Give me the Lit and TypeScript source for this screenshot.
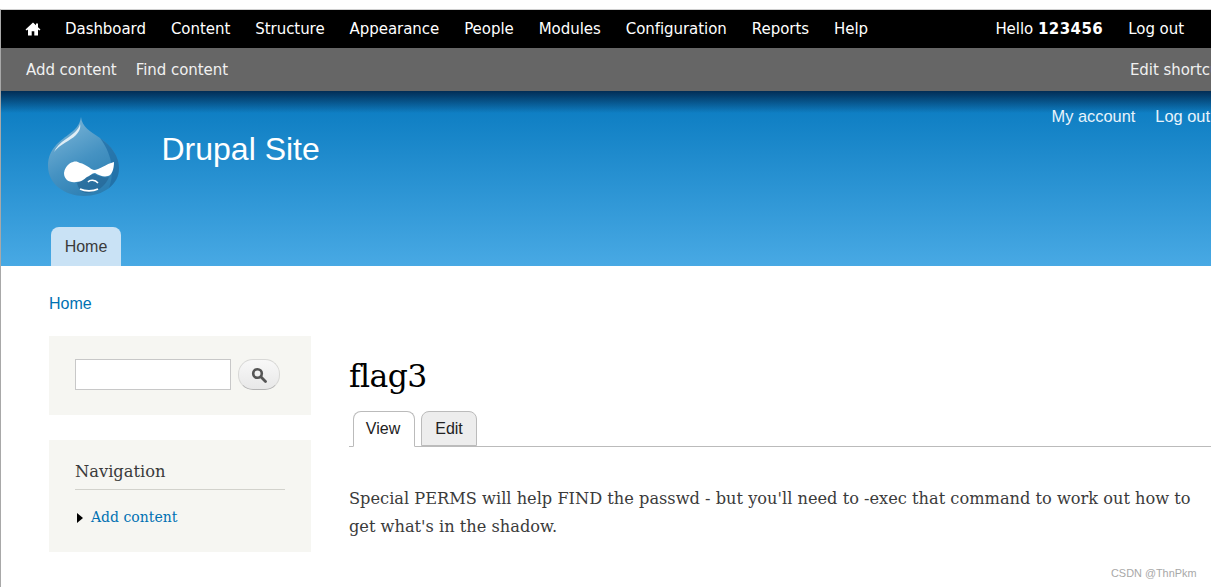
import { LitElement, html, css } from "lit";
import { customElement } from "lit/decorators.js";

const tools = ["Dashboard", "Content", "Structure", "Appearance", "People", "Modules", "Configuration", "Reports", "Help"];

@customElement("app-root")
export class AppRoot extends LitElement {
  static styles = css`
    :host { display: block; height: 587px; overflow: hidden; position: relative; background: #fff; font-family: "Liberation Sans", Arial, sans-serif; }
    a { color: inherit; text-decoration: none; }
    .page { height: 578px; margin-top: 9px; border-top: 1px solid #d0d0d0; border-left: 1px solid #a8a8a8; box-sizing: border-box; display: block; }
    .toolbar, .shortcuts { display: flex; align-items: center; font-family: "DejaVu Sans", Verdana, sans-serif; font-size: 15px; white-space: nowrap; letter-spacing: -0.05px; }
    .toolbar { height: 38px; background: #000; color: #fff; padding: 0 27px 0 24px; }
    .home { display: flex; width: 16px; height: 16px; margin-right: 24px; }
    .tools { display: flex; gap: 25px; }
    .user { margin-left: auto; display: flex; gap: 25px; }
    .user b { font-weight: 700; letter-spacing: 0.45px; }
    .shortcuts { height: 43px; background: #666; color: #f0f0f0; padding: 0 0 0 25px; gap: 19px; }
    .edit { margin-left: auto; margin-right: -22px; flex: none; }
    .header { height: 175px; box-sizing: border-box; background: linear-gradient(#0779bf 0, #48a9e4 100%); position: relative; color: #fff; display: flex; flex-direction: column; overflow: hidden; }
    .header::before { content: ""; position: absolute; left: 0; right: 0; top: 0; height: 22px; background: linear-gradient(rgba(0,20,50,.75), rgba(0,20,50,0)); }
    .secondary { position: absolute; top: 16px; right: 1px; display: flex; gap: 20px; font-size: 16.4px; color: #e8f3fb; }
    .brand { display: flex; align-items: flex-start; height: 136px; }
    .logo { width: 110px; height: 100px; margin: 14px 0 0 29px; flex: none; }
    .name { font-size: 32px; line-height: 37px; margin: 40px 0 0 21.5px; }
    .nav { display: flex; padding-left: 50px; }
    .tab { width: 70px; height: 39px; box-sizing: border-box; background: #c9e2f5; color: #3a3a3a; border-radius: 8px 8px 0 0; font-size: 16px; text-align: center; line-height: 39px; }
    .crumb { padding: 28px 0 0 48px; font-size: 16px; line-height: 19px; color: #0071b3; }
    .columns { display: flex; margin-top: 23px; padding-left: 48px; }
    .side { width: 262px; flex: none; display: flex; flex-direction: column; gap: 25px; }
    .block { background: #f6f6f2; padding: 23px 26px 25px; }
    .search { display: flex; gap: 7px; }
    .input { width: 156px; height: 31px; box-sizing: border-box; background: #fff; border: 1px solid #c8c8c8; }
    .btn { width: 42px; height: 31px; box-sizing: border-box; border-radius: 15px; border: 1px solid #d8d8d6; border-bottom-color: #b4b4b4; background: linear-gradient(#f8f8f8, #e8e8e8); display: flex; align-items: center; justify-content: center; }
    .block.menu { height: 112px; box-sizing: border-box; padding: 20px 26px 0; font-family: "DejaVu Serif", Georgia, serif; }
    h2 { margin: 0; font-weight: 400; font-size: 16.3px; line-height: 23px; padding-bottom: 6px; color: #3b3b3b; border-bottom: 1px solid #d2d2cc; width: 210px; }
    .item { display: flex; align-items: center; margin-top: 16px; font-size: 14px; line-height: 22px; color: #0071b3; }
    .arrow { width: 0; height: 0; border-left: 6px solid #000; border-top: 5px solid transparent; border-bottom: 5px solid transparent; margin: 1px 8px 0 2px; }
    .main { flex: 1; margin-left: 38px; font-family: "DejaVu Serif", Georgia, serif; }
    h1 { margin: 18px 0 0; font-weight: 400; font-size: 31.5px; line-height: 44px; color: #000; letter-spacing: -0.6px; }
    .tabs { display: flex; margin-top: 13px; gap: 6px; padding-left: 4px; border-bottom: 1px solid #bbb; font-family: "Liberation Sans", Arial, sans-serif; font-size: 16px; height: 35px; }
    .t { box-sizing: border-box; height: 36px; border: 1px solid #bbb; border-radius: 8px 8px 0 0; line-height: 33px; text-align: center; color: #222; }
    .t.on { width: 62px; padding-right: 2px; background: #fff; border-bottom-color: #fff; }
    .t.off { width: 56px; height: 35px; background: #ededed; }
    p { margin: 38px 0 0; font-size: 16.22px; line-height: 28px; color: #3b3b3b; width: 850px; }
    .mark { position: absolute; left: 1111px; top: 567px; font-size: 10.9px; line-height: 13px; color: #a8a8a8; }
  `;

  render() {
    return html`
      <div class="page">
        <div class="toolbar">
          <svg class="home" viewBox="0 0 16 16"><path fill="#fff" d="M8 1.5 0.5 8.6 1.7 9.6 3 8.5V14.5H6.7V10.3H9.3V14.5H13V8.5L14.3 9.6 15.5 8.6 13 6.2V2.5H11V4.3Z"/></svg>
          <div class="tools">${tools.map((t) => html`<a>${t}</a>`)}</div>
          <div class="user"><span>Hello <b>123456</b></span><a>Log out</a></div>
        </div>
        <div class="shortcuts"><a>Add content</a><a>Find content</a><a class="edit">Edit shortcuts</a></div>
        <div class="header">
          <div class="secondary"><a>My account</a><a>Log out</a></div>
          <div class="brand">
            <svg class="logo" viewBox="0 0 110 100">
              <defs>
                <linearGradient id="d" x1="0.2" y1="0" x2="0.7" y2="1"><stop offset="0" stop-color="#7db6d8"/><stop offset=".55" stop-color="#4592c2"/><stop offset="1" stop-color="#2a7db1"/></linearGradient>
              </defs>
              <path fill="url(#d)" d="M51 12C52 22 60 26 70 33C82 41 89 52 89 63C89 80 73 91 54 91C35 91 18 79 18 61C18 44 30 36 38 30C45 25 50 20 51 12Z"/>
              <path fill="#1f6ea6" opacity=".75" d="M70 33C82 41 89 52 89 63C89 72 85 78 79 83C84 70 84 52 70 33Z"/>
              <path fill="#fff" opacity=".8" d="M50 19C49 25 42 30 36 34C30 38 26 42 24 47C30 39 40 36 46 30C49 27 51 23 50 19Z"/>
              <path fill="#235f8c" opacity=".55" d="M47 78C52 74 56 71 64 69C71 72 75 73 79 72C76 81 66 88 56 88C51 87 48 83 47 78Z"/>
              <path fill="#fff" d="M34 68C35 60 42 57 43 57C46 56 48 57 50 58C56 59 60 64 64 65C69 65 76 59 84 57C84 64 82 70 78 71C74 72 70 71 65 68C62 68 60 71 57 72C54 74 52 77 46 77C40 78 34 75 34 68Z"/>
              <path fill="none" stroke="#fff" stroke-width="1.7" d="M50 84C55 86.5 63 86.5 68 84"/>
              <path fill="none" stroke="#fff" stroke-width="1.5" d="M58 77C60 74.5 65 74.5 68 78"/>
            </svg>
            <div class="name">Drupal Site</div>
          </div>
          <div class="nav"><a class="tab">Home</a></div>
        </div>
        <div class="crumb"><a>Home</a></div>
        <div class="columns">
          <div class="side">
            <div class="block">
              <div class="search">
                <div class="input"></div>
                <div class="btn"><svg width="16" height="16" viewBox="0 0 16 16"><circle cx="6.5" cy="6.5" r="4.3" fill="none" stroke="#555" stroke-width="2.6"/><path d="M9.8 9.8 14.5 14.5" stroke="#555" stroke-width="2.8" stroke-linecap="round"/></svg></div>
              </div>
            </div>
            <div class="block menu">
              <h2>Navigation</h2>
              <div class="item"><span class="arrow"></span><a>Add content</a></div>
            </div>
          </div>
          <div class="main">
            <h1>flag3</h1>
            <div class="tabs"><a class="t on">View</a><a class="t off">Edit</a></div>
            <p>Special PERMS will help FIND the passwd - but you'll need to -exec that command to work out how to get what's in the shadow.</p>
          </div>
        </div>
      </div>
      <div class="mark">CSDN @ThnPkm</div>
    `;
  }
}
